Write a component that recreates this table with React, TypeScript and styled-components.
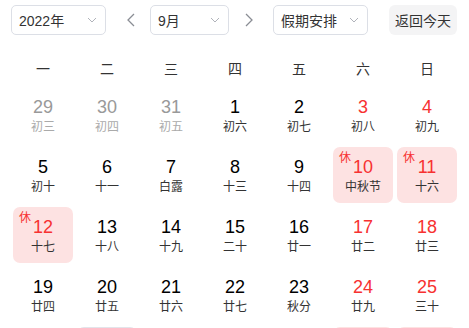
import React from "react";
import styled, { createGlobalStyle } from "styled-components";

const GlobalStyle = createGlobalStyle`
  html, body {
    margin: 0;
    padding: 0;
    overflow: hidden;
    background: #fff;
    font-family: "Liberation Sans", Arial, "Noto Sans CJK SC", sans-serif;
  }
`;

// Toolbar with selects and arrows
const Toolbar = styled.div`
  display: flex;
  align-items: center;
  padding: 5px 0 0 11px;
  height: 30px;
`;

const Select = styled.div<{ $width: number }>`
  box-sizing: border-box;
  width: ${(p) => p.$width}px;
  height: 30px;
  border: 1px solid #dcdfe6;
  border-radius: 5px;
  display: flex;
  align-items: center;
  justify-content: space-between;
  padding: 0 8px 0 7px;
  font-size: 14px;
  color: #333;
`;

const ArrowButton = styled.div<{ $ml: number; $mr: number }>`
  width: 20px;
  height: 30px;
  margin: 0 ${(p) => p.$mr}px 0 ${(p) => p.$ml}px;
  display: flex;
  align-items: center;
  justify-content: center;
`;

const TodayButton = styled.div`
  margin-left: 21px;
  width: 68px;
  height: 30px;
  border-radius: 6px;
  background: #f4f4f5;
  display: flex;
  align-items: center;
  justify-content: center;
  font-size: 14px;
  color: #333;
`;

const Grid = styled.div`
  display: grid;
  grid-template-columns: repeat(7, 64px);
  margin: 18px 0 0 11px;
`;

const WeekHead = styled.div<{ $weekend?: boolean }>`
  height: 32px;
  line-height: 32px;
  text-align: center;
  font-size: 14px;
  color: #333;
`;

const Cell = styled.div<{ $rest?: boolean; $today?: boolean }>`
  position: relative;
  box-sizing: border-box;
  margin: 2px;
  height: 56px;
  border-radius: 7px;
  padding-top: 10px;
  text-align: center;
  background: ${(p) => (p.$rest ? "#fde2e2" : p.$today ? "#e3e4ea" : "transparent")};
`;

const DayNum = styled.div<{ $tone: "normal" | "red" | "muted" }>`
  font-size: 18px;
  line-height: 20px;
  color: ${(p) => (p.$tone === "red" ? "#f73131" : p.$tone === "muted" ? "#999" : "#000")};
`;

const Lunar = styled.div<{ $muted?: boolean }>`
  font-size: 12px;
  line-height: 16px;
  margin-top: 2px;
  color: ${(p) => (p.$muted ? "#aaa" : "#333")};
`;

const RestMark = styled.span`
  position: absolute;
  left: 6px;
  top: 4px;
  font-size: 12px;
  line-height: 14px;
  color: #f73131;
`;

const Chevron = () => (
  <svg width="10" height="6" viewBox="0 0 10 6">
    <path d="M1 1l4 4 4-4" fill="none" stroke="#b0b3ba" strokeWidth="1" />
  </svg>
);

const Arrow = ({ dir }: { dir: "left" | "right" }) => (
  <svg width="8" height="14" viewBox="0 0 8 14">
    <path
      d={dir === "left" ? "M7 1L1 7l6 6" : "M1 1l6 6-6 6"}
      fill="none"
      stroke="#8a8d94"
      strokeWidth="1.3"
    />
  </svg>
);

interface Day {
  n: number;
  lunar: string;
  muted?: boolean;
  rest?: boolean;
  today?: boolean;
}

const days: Day[] = [
  { n: 29, lunar: "初三", muted: true },
  { n: 30, lunar: "初四", muted: true },
  { n: 31, lunar: "初五", muted: true },
  { n: 1, lunar: "初六" },
  { n: 2, lunar: "初七" },
  { n: 3, lunar: "初八" },
  { n: 4, lunar: "初九" },
  { n: 5, lunar: "初十" },
  { n: 6, lunar: "十一" },
  { n: 7, lunar: "白露" },
  { n: 8, lunar: "十三" },
  { n: 9, lunar: "十四" },
  { n: 10, lunar: "中秋节", rest: true },
  { n: 11, lunar: "十六", rest: true },
  { n: 12, lunar: "十七", rest: true },
  { n: 13, lunar: "十八" },
  { n: 14, lunar: "十九" },
  { n: 15, lunar: "二十" },
  { n: 16, lunar: "廿一" },
  { n: 17, lunar: "廿二" },
  { n: 18, lunar: "廿三" },
  { n: 19, lunar: "廿四" },
  { n: 20, lunar: "廿五" },
  { n: 21, lunar: "廿六" },
  { n: 22, lunar: "廿七" },
  { n: 23, lunar: "秋分" },
  { n: 24, lunar: "廿九" },
  { n: 25, lunar: "三十" },
  { n: 26, lunar: "九月" },
  { n: 27, lunar: "初二", today: true },
  { n: 28, lunar: "初三" },
  { n: 29, lunar: "初四" },
  { n: 30, lunar: "初五" },
  { n: 1, lunar: "国庆节", rest: true },
  { n: 2, lunar: "初七", rest: true },
];

const weekNames = ["一", "二", "三", "四", "五", "六", "日"];

const App: React.FC = () => {
  return (
    <>
      <GlobalStyle />
      <Toolbar>
        <Select $width={95}>
          <span>2022年</span>
          <Chevron />
        </Select>
        <ArrowButton $ml={15} $mr={9}>
          <Arrow dir="left" />
        </ArrowButton>
        <Select $width={79}>
          <span>9月</span>
          <Chevron />
        </Select>
        <ArrowButton $ml={10} $mr={14}>
          <Arrow dir="right" />
        </ArrowButton>
        <Select $width={95}>
          <span>假期安排</span>
          <Chevron />
        </Select>
        <TodayButton>返回今天</TodayButton>
      </Toolbar>

      <Grid>
        {weekNames.map((w) => (
          <WeekHead key={w}>{w}</WeekHead>
        ))}
        {days.map((d, i) => {
          const weekend = i % 7 >= 5;
          const tone = d.muted ? "muted" : weekend || d.rest ? "red" : "normal";
          return (
            <Cell key={i} $rest={d.rest} $today={d.today}>
              {d.rest && <RestMark>休</RestMark>}
              <DayNum $tone={tone}>{d.n}</DayNum>
              <Lunar $muted={d.muted}>{d.lunar}</Lunar>
            </Cell>
          );
        })}
      </Grid>
    </>
  );
};

export default App;
